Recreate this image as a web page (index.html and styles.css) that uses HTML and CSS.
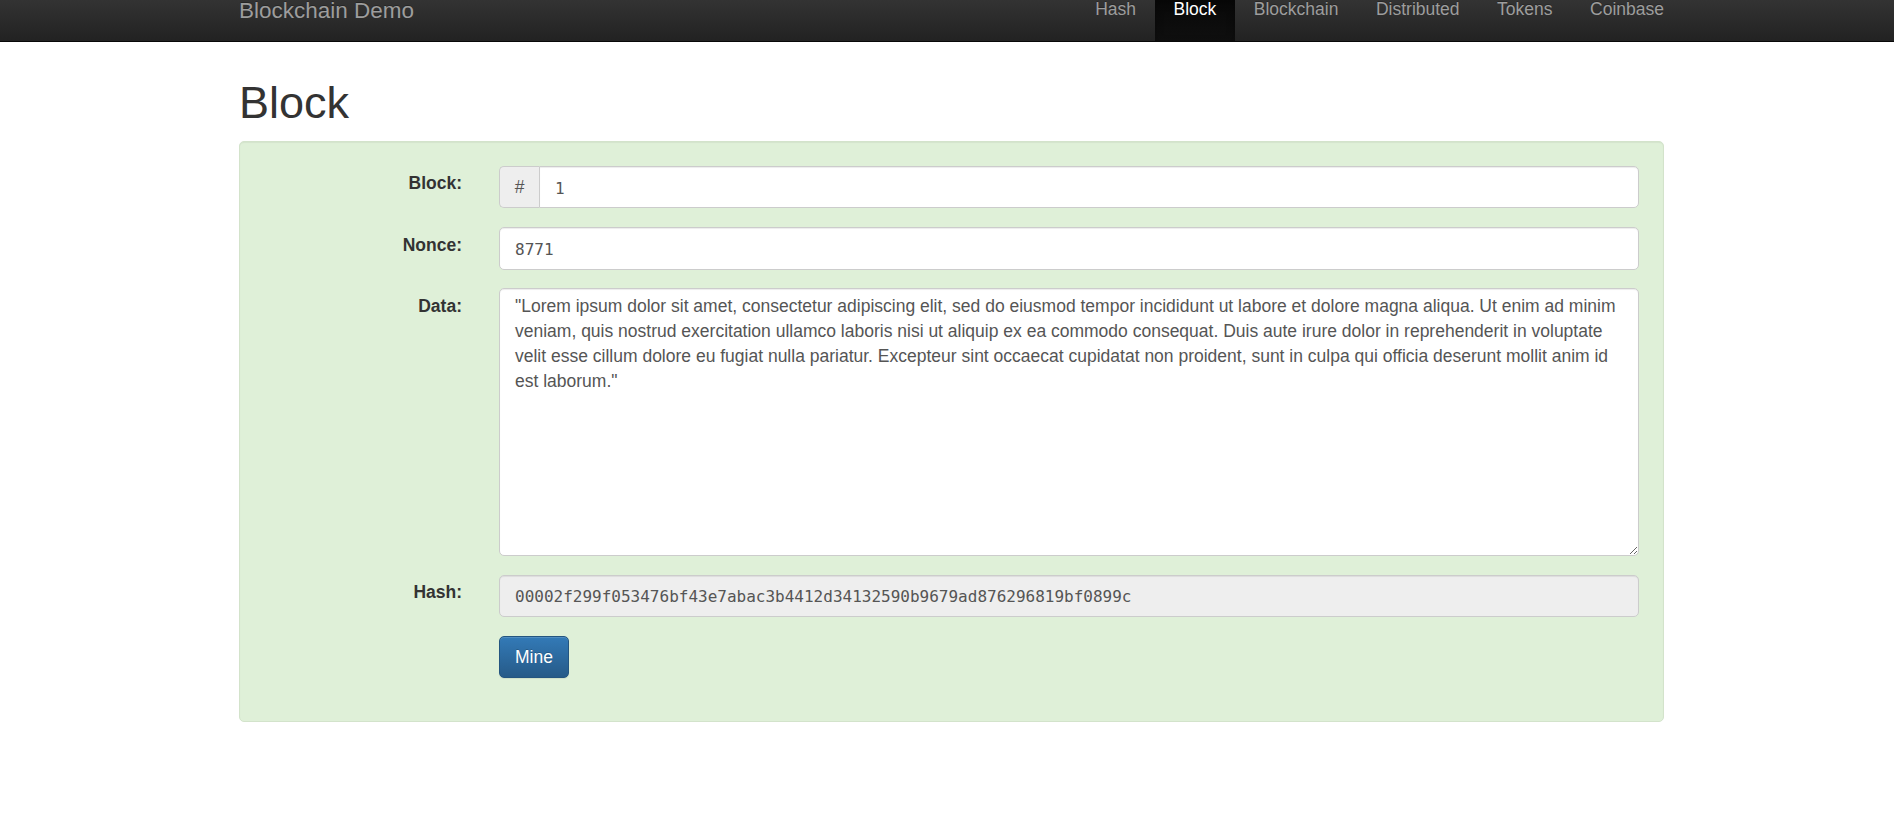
FILE: index.html
```html
<!DOCTYPE html>
<html lang="en">
<head>
<meta charset="utf-8">
<title>Blockchain Demo</title>
<link rel="stylesheet" href="styles.css">
</head>
<body>
<nav class="navbar">
  <div class="nav-inner">
    <a class="brand" href="#">Blockchain Demo</a>
    <ul class="nav">
      <li><a href="#">Hash</a></li>
      <li class="active"><a href="#">Block</a></li>
      <li><a href="#">Blockchain</a></li>
      <li><a href="#">Distributed</a></li>
      <li><a href="#">Tokens</a></li>
      <li><a href="#">Coinbase</a></li>
    </ul>
  </div>
</nav>
<main class="container">
  <h1 class="title">Block</h1>
  <div class="well">
    <form class="block-form">
      <label class="control-label" for="block">Block:</label>
      <div class="input-group">
        <span class="addon">#</span>
        <input class="form-control mono addon-input" id="block" type="text" value="1">
      </div>

      <label class="control-label" for="nonce">Nonce:</label>
      <input class="form-control mono" id="nonce" type="text" value="8771">

      <label class="control-label" for="data">Data:</label>
      <textarea class="form-control data" id="data" rows="10">"Lorem ipsum dolor sit amet, consectetur adipiscing elit, sed do eiusmod tempor incididunt ut labore et dolore magna aliqua. Ut enim ad minim veniam, quis nostrud exercitation ullamco laboris nisi ut aliquip ex ea commodo consequat. Duis aute irure dolor in reprehenderit in voluptate velit esse cillum dolore eu fugiat nulla pariatur. Excepteur sint occaecat cupidatat non proident, sunt in culpa qui officia deserunt mollit anim id est laborum."</textarea>

      <label class="control-label" for="hash">Hash:</label>
      <input class="form-control mono readonly" id="hash" type="text" readonly value="00002f299f053476bf43e7abac3b4412d34132590b9679ad876296819bf0899c">

      <span class="spacer"></span>
      <button class="btn-primary" type="button">Mine</button>
    </form>
  </div>
</main>
</body>
</html>
```
FILE: styles.css
```css
* { box-sizing: border-box; }

html, body {
  margin: 0;
  padding: 0;
  background: #fff;
}

body {
  font-family: "Liberation Sans", Arial, Helvetica, sans-serif;
  font-size: 17.5px;
  line-height: 25px;
  color: #333;
}

/* navbar */
.navbar {
  height: 42px;
  background: linear-gradient(to bottom, #333333 0%, #222222 100%);
  border-bottom: 1px solid #080808;
}

.nav-inner {
  width: 1425px;
  margin-left: 239px;
  height: 41px;
  display: flex;
  justify-content: space-between;
  align-items: flex-start;
}

.brand {
  font-size: 22.5px;
  line-height: 22px;
  color: #9d9d9d;
  text-decoration: none;
  text-shadow: 0 -1px 0 rgba(0, 0, 0, .25);
}

.nav {
  list-style: none;
  margin: 0 -18.75px 0 0;
  padding: 0;
  display: flex;
  height: 41px;
}

.nav li a {
  display: block;
  height: 41px;
  padding: 0 18.75px;
  line-height: 19.5px;
  color: #9d9d9d;
  text-decoration: none;
  text-shadow: 0 -1px 0 rgba(0, 0, 0, .25);
}

.nav li.active a {
  color: #fff;
  background: linear-gradient(to bottom, #080808 0%, #0f0f0f 100%);
  box-shadow: inset 0 3px 9px rgba(0, 0, 0, .25);
}

/* page */
.container {
  width: 1425px;
  margin-left: 239px;
}

.title {
  font-size: 45px;
  line-height: 49.5px;
  font-weight: normal;
  color: #333;
  margin: 35.7px 0 13.8px;
}

.well {
  background: #dff0d8;
  border: 1px solid #d3e3cb;
  border-radius: 5px;
  padding: 24px 24px 42.75px;
  box-shadow: inset 0 1px 1px rgba(0, 0, 0, .05);
}

.block-form {
  display: grid;
  grid-template-columns: 198px 1fr;
  column-gap: 37px;
  row-gap: 18.75px;
  align-items: start;
}

.control-label {
  text-align: right;
  font-weight: bold;
  padding-top: 5.5px;
  line-height: 25px;
  color: #333;
}

.form-control {
  display: block;
  width: 100%;
  height: 42.5px;
  border: 1px solid #ccc;
  border-radius: 5px;
  background: #fff;
  color: #555;
  box-shadow: inset 0 1px 1px rgba(0, 0, 0, .075);
  outline: none;
  margin: 0;
}

.mono {
  font-family: "DejaVu Sans Mono", "Liberation Mono", monospace;
  font-size: 16px;
  padding: 2px 15px 0;
}

.input-group {
  display: flex;
  width: 100%;
}

.addon {
  flex: 0 0 40px;
  height: 42.5px;
  background: #eee;
  border: 1px solid #ccc;
  border-right: 0;
  border-radius: 5px 0 0 5px;
  color: #555;
  text-align: center;
  line-height: 40.5px;
  font-size: 17.5px;
}

.addon-input {
  flex: 1 1 auto;
  border-radius: 0 5px 5px 0;
}

.data {
  height: 267.5px;
  padding: 5px 15px 10px;
  font-family: "Liberation Sans", Arial, Helvetica, sans-serif;
  font-size: 17.5px;
  line-height: 25px;
  resize: vertical;
}

.readonly {
  background: #eee;
}

.btn-primary {
  justify-self: start;
  height: 42.5px;
  padding: 0 15px;
  font-family: "Liberation Sans", Arial, Helvetica, sans-serif;
  font-size: 17.5px;
  color: #fff;
  background: linear-gradient(to bottom, #337ab7 0%, #265a88 100%);
  border: 1px solid #245580;
  border-radius: 5px;
  text-shadow: 0 -1px 0 rgba(0, 0, 0, .2);
  box-shadow: inset 0 1px 0 rgba(255, 255, 255, .15), 0 1px 1px rgba(0, 0, 0, .075);
  cursor: pointer;
}
```
